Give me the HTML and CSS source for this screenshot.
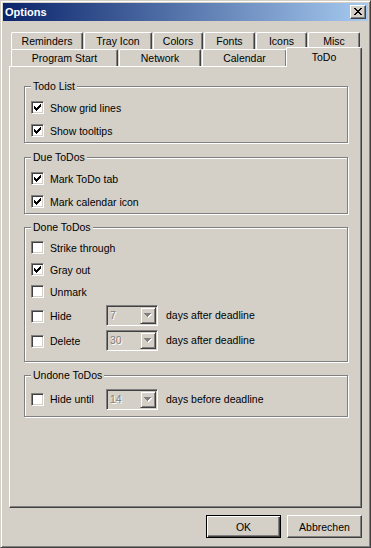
FILE: index.html
```html
<!DOCTYPE html>
<html lang="de">

<head>
    <meta charset="UTF-8">
    <title>Options</title>
    <link rel="stylesheet" href="styles.css">
</head>

<body>
    <div class="window">
        <!-- Titelleiste -->
        <div class="titlebar">
            <span class="title">Options</span>
            <div class="close-btn">
                <svg width="8" height="7" viewBox="0 0 8 7" shape-rendering="crispEdges">
                    <path d="M0 0h2v1H0zM6 0h2v1H6zM1 1h2v1H1zM5 1h2v1H5zM2 2h4v1H2zM3 3h2v1H3zM2 4h4v1H2zM1 5h2v1H1zM5 5h2v1H5zM0 6h2v1H0zM6 6h2v1H6z" fill="#000"/>
                </svg>
            </div>
        </div>

        <div class="dialog">
            <!-- Reiter -->
            <div class="tabs">
                <div class="tab-row back">
                    <div class="tab tab-reminders">Reminders</div>
                    <div class="tab tab-tray">Tray Icon</div>
                    <div class="tab tab-colors">Colors</div>
                    <div class="tab tab-fonts">Fonts</div>
                    <div class="tab tab-icons">Icons</div>
                    <div class="tab tab-misc">Misc</div>
                </div>
                <div class="tab-row front">
                    <div class="tab tab-start">Program Start</div>
                    <div class="tab tab-network">Network</div>
                    <div class="tab tab-calendar">Calendar</div>
                    <div class="tab tab-todo active">ToDo</div>
                </div>
            </div>

            <!-- Inhalt ToDo -->
            <div class="panel">
                <div class="group group-list">
                    <div class="group-title">Todo List</div>
                    <div class="row"><span class="check checked"></span>Show grid lines</div>
                    <div class="row"><span class="check checked"></span>Show tooltips</div>
                </div>

                <div class="group group-due">
                    <div class="group-title">Due ToDos</div>
                    <div class="row"><span class="check checked"></span>Mark ToDo tab</div>
                    <div class="row"><span class="check checked"></span>Mark calendar icon</div>
                </div>

                <div class="group group-done">
                    <div class="group-title">Done ToDos</div>
                    <div class="row"><span class="check"></span>Strike through</div>
                    <div class="row"><span class="check checked"></span>Gray out</div>
                    <div class="row"><span class="check"></span>Unmark</div>
                    <div class="row combo-row">
                        <span class="check"></span><span class="label">Hide</span>
                        <div class="combo"><span class="combo-value">7</span><span class="combo-btn"></span></div>
                        <span class="after">days after deadline</span>
                    </div>
                    <div class="row combo-row">
                        <span class="check"></span><span class="label">Delete</span>
                        <div class="combo"><span class="combo-value">30</span><span class="combo-btn"></span></div>
                        <span class="after">days after deadline</span>
                    </div>
                </div>

                <div class="group group-undone">
                    <div class="group-title">Undone ToDos</div>
                    <div class="row combo-row">
                        <span class="check"></span><span class="label">Hide until</span>
                        <div class="combo"><span class="combo-value">14</span><span class="combo-btn"></span></div>
                        <span class="after">days before deadline</span>
                    </div>
                </div>
            </div>

            <!-- Buttons -->
            <div class="buttons">
                <button class="btn default">OK</button>
                <button class="btn">Abbrechen</button>
            </div>
        </div>
    </div>

    <script>
        // Häkchen und Pfeile einsetzen
        const tick = '<svg width="7" height="7" viewBox="0 0 7 7" shape-rendering="crispEdges"><path d="M0 2h1v3H0zM1 3h1v3H1zM2 4h1v3H2zM3 3h1v3H3zM4 2h1v3H4zM5 1h1v3H5zM6 0h1v3H6z" fill="#000"/></svg>';
        const arrow = '<svg width="8" height="5" viewBox="0 0 8 5" shape-rendering="crispEdges"><path d="M1 1h7v1H1zM2 2h5v1H2zM3 3h3v1H3zM4 4h1v1H4z" fill="#fff"/><path d="M0 0h7v1H0zM1 1h5v1H1zM2 2h3v1H2zM3 3h1v1H3z" fill="#808080"/></svg>';

        document.querySelectorAll(".check.checked").forEach(box => box.innerHTML = tick);
        document.querySelectorAll(".combo-btn").forEach(btn => btn.innerHTML = arrow);
    </script>
</body>

</html>
```

FILE: styles.css
```css
body {
    margin: 0;
    padding: 0;
    font-family: 'Liberation Sans', Arial, sans-serif;
    font-size: 10.5px;
    color: #000;
    background: #d4d0c8;
}

.window {
    width: 371px;
    height: 548px;
    box-sizing: border-box;
    padding: 2px;
    background: #d4d0c8;
    border: 1px solid;
    border-color: #d4d0c8 #404040 #404040 #d4d0c8;
    box-shadow: inset 1px 1px #fff, inset -1px -1px #808080;
}

/* Titelleiste */
.titlebar {
    height: 18px;
    display: flex;
    align-items: center;
    justify-content: space-between;
    padding: 0 2px;
    background: linear-gradient(to right, #0a246a, #a6caf0);
}

.title {
    color: #fff;
    font-weight: bold;
    font-size: 11px;
}

.close-btn {
    width: 16px;
    height: 14px;
    box-sizing: border-box;
    display: flex;
    align-items: center;
    justify-content: center;
    padding: 0 1px 1px 0;
    background: #d4d0c8;
    border: 1px solid;
    border-color: #fff #404040 #404040 #fff;
    box-shadow: inset -1px -1px #808080;
}

.close-btn svg {
    display: block;
}

.dialog {
    padding: 11px 6px 0 6px;
}

/* Reiter */
.tabs {
    padding-left: 2px;
}

.tab-row {
    display: flex;
    align-items: flex-end;
    height: 17px;
}

.tab {
    box-sizing: border-box;
    height: 17px;
    margin-right: 1px;
    display: flex;
    align-items: center;
    justify-content: center;
    background: #d4d0c8;
    border-top: 1px solid #fff;
    border-left: 1px solid #fff;
    border-right: 1px solid #404040;
    border-radius: 2px 2px 0 0;
    box-shadow: inset -1px 0 #808080;
    white-space: nowrap;
}

.tab-reminders { width: 72px; }
.tab-tray { width: 68px; }
.tab-colors { width: 50px; }
.tab-fonts { width: 51px; }
.tab-icons { width: 51px; }
.tab-misc { width: 52px; margin-right: 0; }

.tab-start { width: 107px; }
.tab-network { width: 82px; }
.tab-calendar { width: 85px; }

.tab.active {
    position: relative;
    z-index: 2;
    width: 76px;
    height: 20px;
    margin: 0 -2px -1px -2px;
    padding-bottom: 2px;
}

/* Panel */
.panel {
    height: 442px;
    box-sizing: border-box;
    display: flex;
    flex-direction: column;
    gap: 14px;
    padding: 19px 13px 0 14px;
    border: 1px solid;
    border-color: #fff #404040 #404040 #fff;
    box-shadow: inset -1px -1px #808080;
}

.group {
    display: flex;
    flex-direction: column;
    padding: 0 0 3px 6px;
    border: 1px solid #808080;
    box-shadow: inset 1px 1px #fff, 1px 1px #fff;
}

.group-title {
    align-self: flex-start;
    margin: -7px 0 6px 0;
    padding: 0 2px;
    line-height: 13px;
    background: #d4d0c8;
}

.row {
    display: flex;
    align-items: center;
    height: 17px;
    white-space: nowrap;
}

.row + .row {
    margin-top: 6px;
}

.combo-row {
    height: 22px;
}

/* Gruppe "Done ToDos" hat engere Abstände */
.group-done {
    margin-top: -1px;
    padding-bottom: 10px;
}

.group-done .group-title {
    margin-bottom: 5px;
}

.group-done .row + .row {
    margin-top: 5px;
}

.group-done .row + .combo-row {
    margin-top: 4px;
}

.group-done .combo-row + .combo-row {
    margin-top: 3px;
}

.group-done .combo-row .check,
.group-done .combo-row .label {
    margin-top: 2px;
}

.group-undone {
    margin-top: -1px;
    padding-bottom: 6px;
}

.check {
    width: 13px;
    height: 13px;
    box-sizing: border-box;
    flex-shrink: 0;
    display: flex;
    align-items: center;
    justify-content: center;
    margin-right: 6px;
    background: #fff;
    border: 1px solid;
    border-color: #808080 #fff #fff #808080;
    box-shadow: inset 1px 1px #404040, inset -1px -1px #d4d0c8;
}

.check svg {
    display: block;
}

.label {
    width: 56px;
}

/* Combobox (deaktiviert) */
.combo {
    width: 52px;
    height: 21px;
    box-sizing: border-box;
    display: flex;
    padding: 1px;
    border: 1px solid;
    border-color: #808080 #fff #fff #808080;
    box-shadow: inset 1px 1px #404040, inset -1px -1px #d4d0c8;
}

.combo-value {
    flex: 1;
    padding: 2px 0 0 2px;
    color: #808080;
    text-shadow: 1px 1px #fff;
}

.combo-btn {
    width: 16px;
    height: 17px;
    box-sizing: border-box;
    display: flex;
    align-items: center;
    justify-content: center;
    border: 1px solid;
    border-color: #d4d0c8 #404040 #404040 #d4d0c8;
    box-shadow: inset 1px 1px #fff, inset -1px -1px #808080;
}

.combo-btn svg {
    display: block;
}

.after {
    margin-left: 8px;
}

/* Buttons */
.buttons {
    display: flex;
    justify-content: flex-end;
    gap: 6px;
    margin-top: 7px;
}

.btn {
    width: 75px;
    height: 23px;
    box-sizing: border-box;
    padding: 0;
    font: inherit;
    color: #000;
    background: #d4d0c8;
    border: 1px solid;
    border-color: #fff #404040 #404040 #fff;
    box-shadow: inset -1px -1px #808080;
}

.btn.default {
    border: 1px solid #000;
    box-shadow: inset 1px 1px #fff, inset -1px -1px #404040, inset -2px -2px #808080;
}
```
